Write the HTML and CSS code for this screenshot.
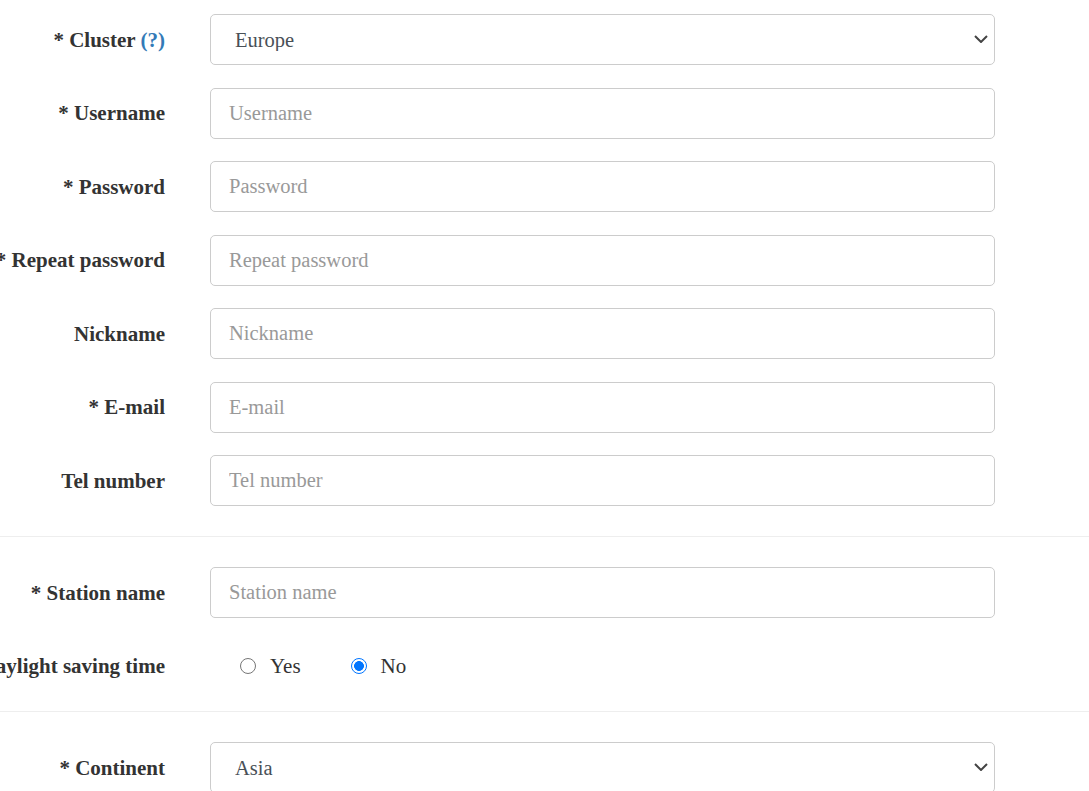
FILE: index.html
```html
<!DOCTYPE html>
<html lang="en">
<head>
<meta charset="utf-8">
<title>Register</title>
<link rel="stylesheet" href="styles.css">
</head>
<body>
<form class="form">
  <div class="group group-first">
    <div class="row">
      <label class="label"><span>* Cluster <a class="help" href="#">(?)</a></span></label>
      <div class="select-wrap">
        <select class="control select"><option>Europe</option></select>
        <svg class="chevron" width="14" height="8" viewBox="0 0 14 8"><path d="M1 1 L7 7 L13 1" fill="none" stroke="#444" stroke-width="2"/></svg>
      </div>
    </div>
    <div class="row">
      <label class="label"><span>* Username</span></label>
      <input class="control" type="text" placeholder="Username">
    </div>
    <div class="row">
      <label class="label"><span>* Password</span></label>
      <input class="control" type="password" placeholder="Password">
    </div>
    <div class="row">
      <label class="label"><span>* Repeat password</span></label>
      <input class="control" type="password" placeholder="Repeat password">
    </div>
    <div class="row">
      <label class="label"><span>Nickname</span></label>
      <input class="control" type="text" placeholder="Nickname">
    </div>
    <div class="row">
      <label class="label"><span>* E-mail</span></label>
      <input class="control" type="text" placeholder="E-mail">
    </div>
    <div class="row">
      <label class="label"><span>Tel number</span></label>
      <input class="control" type="text" placeholder="Tel number">
    </div>
  </div>
  <div class="group group-mid">
    <div class="row">
      <label class="label"><span>* Station name</span></label>
      <input class="control" type="text" placeholder="Station name">
    </div>
    <div class="row">
      <label class="label"><span>Daylight saving time</span></label>
      <div class="radios">
        <label class="radio"><input type="radio" name="dst"><span>Yes</span></label>
        <label class="radio"><input type="radio" name="dst" checked><span>No</span></label>
      </div>
    </div>
  </div>
  <div class="group group-last">
    <div class="row">
      <label class="label"><span>* Continent</span></label>
      <div class="select-wrap">
        <select class="control select"><option>Asia</option></select>
        <svg class="chevron" width="14" height="8" viewBox="0 0 14 8"><path d="M1 1 L7 7 L13 1" fill="none" stroke="#444" stroke-width="2"/></svg>
      </div>
    </div>
  </div>
</form>
</body>
</html>
```

FILE: styles.css
```css
html, body {
  margin: 0;
  padding: 0;
  background: #fff;
  overflow-x: hidden;
}

body {
  font-family: "Liberation Serif", "Times New Roman", serif;
  font-size: 20.5px;
  color: #333;
}

.form {
  width: 1089px;
}

.group {
  display: flex;
  flex-direction: column;
  gap: 22.5px;
}

.group-first {
  padding-top: 14px;
  padding-bottom: 30px;
}

.group-mid {
  border-top: 1px solid #eee;
  padding-top: 30px;
  padding-bottom: 19.5px;
}

.group-last {
  border-top: 1px solid #eee;
  padding-top: 30px;
}

.row {
  display: grid;
  grid-template-columns: 165px 785px;
  column-gap: 45px;
  align-items: center;
  height: 51px;
}

.label {
  display: flex;
  justify-content: flex-end;
  font-weight: bold;
  font-size: 21px;
  white-space: nowrap;
  color: #333;
  padding-top: 1px;
}

.help {
  color: #337ab7;
  text-decoration: none;
}

.control {
  box-sizing: border-box;
  width: 785px;
  height: 51px;
  margin: 0;
  padding: 0 18px;
  border: 1px solid #ccc;
  border-radius: 5px;
  background: #fff;
  font-family: inherit;
  font-size: 20.5px;
  color: #495057;
  outline: none;
}

.control::placeholder {
  color: #999;
}

.select-wrap {
  position: relative;
  width: 785px;
  height: 51px;
}

.select {
  appearance: none;
  -webkit-appearance: none;
  padding-left: 24px;
}

.chevron {
  position: absolute;
  right: 7px;
  top: 21px;
  pointer-events: none;
}

.radios {
  display: flex;
  align-items: center;
  gap: 50px;
  padding-left: 30px;
}

.radio {
  display: flex;
  align-items: center;
  gap: 14px;
  font-size: 21px;
  color: #333;
}

.radio input {
  appearance: none;
  -webkit-appearance: none;
  box-sizing: border-box;
  width: 16px;
  height: 16px;
  margin: 0;
  border: 1.5px solid #767676;
  border-radius: 50%;
  background: #fff;
}

.radio input:checked {
  border: 1.5px solid #0075ff;
  background: radial-gradient(circle, #0075ff 0 4.6px, #fff 5.2px);
}
```
